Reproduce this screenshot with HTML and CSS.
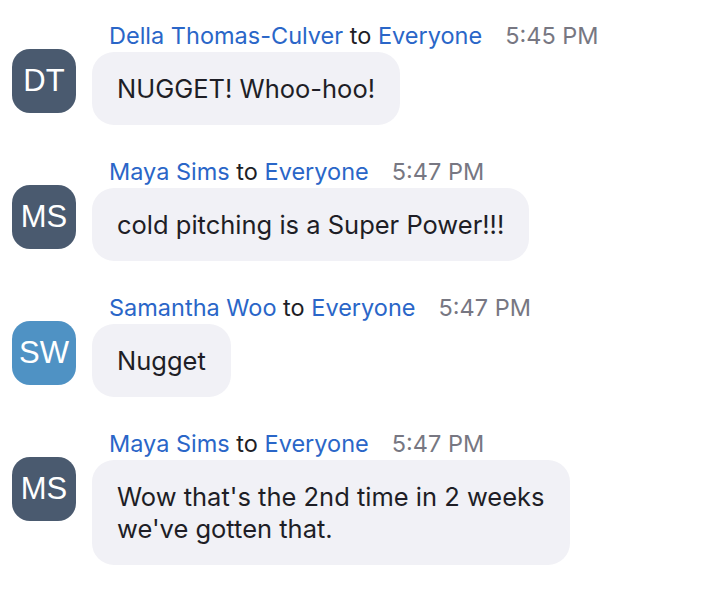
FILE: index.html
```html
<!DOCTYPE html>
<html>
<head>
<meta charset="utf-8">
<link rel="stylesheet" href="styles.css">
</head>
<body>
<div class="chat">
  <div class="msg">
    <div class="head"><span class="name">Della Thomas-Culver</span> to <span class="name">Everyone</span><span class="time">5:45 PM</span></div>
    <div class="avatar dark">DT</div>
    <div class="bubble">NUGGET! Whoo-hoo!</div>
  </div>
  <div class="msg">
    <div class="head"><span class="name">Maya Sims</span> to <span class="name">Everyone</span><span class="time">5:47 PM</span></div>
    <div class="avatar dark">MS</div>
    <div class="bubble">cold pitching is a Super Power!!!</div>
  </div>
  <div class="msg">
    <div class="head"><span class="name">Samantha Woo</span> to <span class="name">Everyone</span><span class="time">5:47 PM</span></div>
    <div class="avatar light">SW</div>
    <div class="bubble">Nugget</div>
  </div>
  <div class="msg">
    <div class="head"><span class="name">Maya Sims</span> to <span class="name">Everyone</span><span class="time">5:47 PM</span></div>
    <div class="avatar dark">MS</div>
    <div class="bubble">Wow that's the 2nd time in 2 weeks<br>we've gotten that.</div>
  </div>
</div>
</body>
</html>
```

FILE: styles.css
```css
html, body {
  margin: 0;
  padding: 0;
  background: #ffffff;
}
body {
  font-family: "Inter", "Liberation Sans", sans-serif;
  color: #1e1e26;
}
.chat {
  display: flex;
  flex-direction: column;
  gap: 33px;
  padding: 22px 0 0 12px;
}
.msg {
  display: grid;
  grid-template-columns: 64px auto;
  column-gap: 16px;
  row-gap: 2px;
  justify-content: start;
  justify-items: start;
}
.head {
  grid-column: 2;
  grid-row: 1;
  padding-left: 17px;
  font-size: 23.5px;
  line-height: 28px;
  color: #1e1e26;
  white-space: nowrap;
}
.name {
  color: #2a66c8;
}
.time {
  color: #777782;
  margin-left: 23px;
}
.avatar {
  grid-column: 1;
  grid-row: 2;
  width: 64px;
  height: 64px;
  margin-top: -3px;
  border-radius: 18px;
  color: #ffffff;
  font-family: "Liberation Sans", sans-serif;
  font-size: 31px;
  display: flex;
  align-items: center;
  justify-content: center;
}
.dark {
  background: #4a5a6f;
}
.light {
  background: #4f92c4;
}
.bubble {
  grid-column: 2;
  grid-row: 2;
  background: #f1f1f6;
  border-radius: 22px;
  padding: 21px 25px 20px 25px;
  font-size: 25.5px;
  line-height: 32px;
}
```
